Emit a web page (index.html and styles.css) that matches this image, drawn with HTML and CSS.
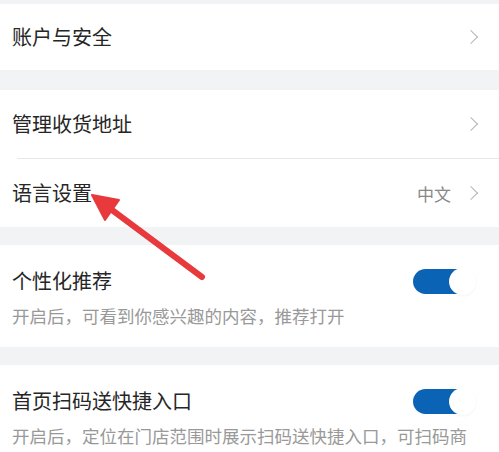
FILE: index.html
```html
<!DOCTYPE html>
<html lang="zh-CN">

<head>
    <meta charset="UTF-8">
    <meta name="viewport" content="width=device-width, initial-scale=1.0">
    <title>设置</title>
    <link rel="stylesheet" href="styles.css">
</head>

<body>
    <div class="page">
        <div class="gap gap-top"></div>

        <!-- 账户 -->
        <div class="group">
            <div class="row row-first">
                <span class="title">账户与安全</span>
                <span class="chevron"></span>
            </div>
        </div>

        <div class="gap"></div>

        <!-- 地址与语言 -->
        <div class="group">
            <div class="row">
                <span class="title">管理收货地址</span>
                <span class="chevron"></span>
            </div>
            <div class="divider"></div>
            <div class="row">
                <span class="title">语言设置</span>
                <span class="extra">中文</span>
                <span class="chevron"></span>
            </div>
        </div>

        <div class="gap gap-small"></div>

        <!-- 开关项 -->
        <div class="group switch-item">
            <div class="switch-head">
                <span class="title">个性化推荐</span>
                <span class="toggle on"><span class="knob"></span></span>
            </div>
            <p class="desc">开启后，可看到你感兴趣的内容，推荐打开</p>
        </div>

        <div class="gap gap-small"></div>

        <div class="group switch-item">
            <div class="switch-head">
                <span class="title">首页扫码送快捷入口</span>
                <span class="toggle on"><span class="knob"></span></span>
            </div>
            <p class="desc">开启后，定位在门店范围时展示扫码送快捷入口，可扫码商品，线上下单送货到家</p>
        </div>

        <!-- 标注箭头 -->
        <svg class="arrow" width="499" height="452" viewBox="0 0 499 452">
            <line x1="202" y1="277" x2="108" y2="207" stroke="#e8393c" stroke-width="6" stroke-linecap="round" />
            <polygon points="92,195 119,200 105,220" fill="#e8393c" stroke="#e8393c" stroke-width="2" stroke-linejoin="round" />
        </svg>
    </div>
</body>

</html>
```

FILE: styles.css
```css
/* Estrutura geral */
html, body {
    margin: 0;
    padding: 0;
    height: 452px;
    overflow: hidden;
}

body {
    font-family: "Noto Sans CJK SC", "Noto Sans", sans-serif;
    background-color: #f2f3f5;
    color: #262626;
}

.page {
    position: relative;
    width: 499px;
}

.gap {
    height: 20px;
}

.gap-small {
    height: 18px;
}

.gap-top {
    height: 4px;
}

.group {
    background-color: #fff;
}

/* Linhas com seta */
.row {
    display: flex;
    align-items: center;
    height: 68px;
    padding: 0 21px 0 12px;
}

.row-first {
    height: 66px;
}

.title {
    font-size: 20px;
    line-height: 26px;
    flex: 1;
}

.extra {
    font-size: 17px;
    color: #888;
    margin-right: 15px;
}

.chevron {
    width: 9px;
    height: 9px;
    border-top: 1.8px solid #b5b5b5;
    border-right: 1.8px solid #b5b5b5;
    transform: rotate(45deg);
    margin-right: 2px;
}

.divider {
    height: 1px;
    margin-left: 17px;
    background-color: #e8e8e8;
}

/* Itens com interruptor */
.switch-item {
    padding: 23px 24px 19px 12px;
}

.switch-head {
    display: flex;
    align-items: center;
}

.desc {
    margin: 10px 0 0;
    font-size: 17.5px;
    line-height: 24px;
    color: #999;
}

.toggle {
    position: relative;
    width: 62px;
    height: 25px;
    border-radius: 13px;
    background-color: #0b63b6;
}

.toggle .knob {
    position: absolute;
    right: -1px;
    top: -1px;
    width: 27px;
    height: 27px;
    border-radius: 50%;
    background-color: #fff;
    box-shadow: 0 1px 3px rgba(0, 0, 0, 0.05);
}

/* Seta vermelha sobreposta */
.arrow {
    position: absolute;
    left: 0;
    top: 0;
    pointer-events: none;
}
```
